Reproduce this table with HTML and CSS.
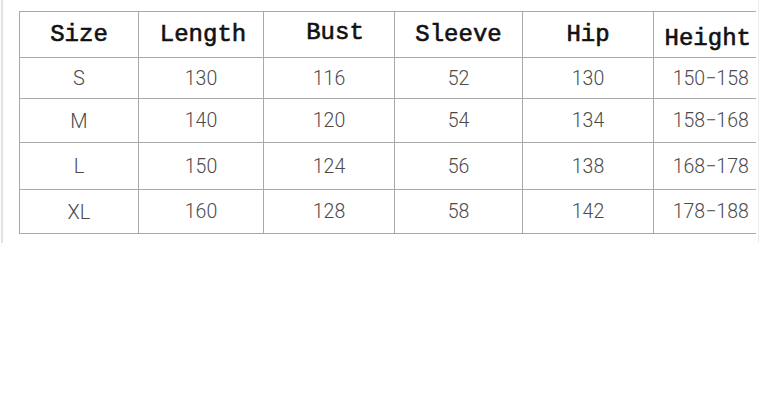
FILE: index.html
```html
<!DOCTYPE html>
<html>
<head>
<meta charset="utf-8">
<link rel="stylesheet" href="styles.css">
</head>
<body>
<div class="frame">
  <table class="sizes">
    <colgroup>
      <col class="c1"><col class="c2"><col class="c3"><col class="c4"><col class="c5"><col class="c6">
    </colgroup>
    <thead>
      <tr class="head">
        <th>Size</th><th class="len">Length</th><th class="bust">Bust</th><th>Sleeve</th><th>Hip</th><th class="hgt">Height</th>
      </tr>
    </thead>
    <tbody>
      <tr class="r1"><td class="sz">S</td><td>130</td><td>116</td><td>52</td><td>130</td><td class="rng">150−158</td></tr>
      <tr class="r2"><td class="sz">M</td><td>140</td><td>120</td><td>54</td><td>134</td><td class="rng">158−168</td></tr>
      <tr class="r3"><td class="sz">L</td><td>150</td><td>124</td><td>56</td><td>138</td><td class="rng">168−178</td></tr>
      <tr class="r4"><td class="sz">XL</td><td>160</td><td>128</td><td>58</td><td>142</td><td class="rng">178−188</td></tr>
    </tbody>
  </table>
</div>
</body>
</html>
```

FILE: styles.css
```css
html, body {
  margin: 0;
  padding: 0;
  background: #fff;
}

.frame {
  margin-left: 1px;
  width: 758px;
  height: 243px;
  border-left: 2px solid #e2e2e2;
  border-right: 1px solid #ececec;
  padding-top: 11px;
  padding-left: 16px;
  box-sizing: border-box;
}

.sizes {
  border-collapse: collapse;
  table-layout: fixed;
  width: 736px;
}

.c1 { width: 119px; }
.c2 { width: 125px; }
.c3 { width: 131px; }
.c4 { width: 128px; }
.c5 { width: 131px; }
.c6 { width: 102px; }

.sizes th, .sizes td {
  border: 1px solid #a9a9a9;
  padding: 0;
  text-align: center;
  vertical-align: middle;
}

.sizes th:last-child, .sizes td:last-child {
  border-right: none;
}

.sizes th {
  font-family: "Liberation Mono", "Courier New", monospace;
  font-size: 24px;
  font-weight: normal;
  -webkit-text-stroke: 0.6px #111;
  color: #111;
  height: 45px;
  line-height: 26px;
}

.sizes th.len { padding-left: 4px; }
.sizes th.bust { padding-left: 12px; padding-bottom: 3px; height: 42px; }
.sizes th.hgt { vertical-align: bottom; padding-bottom: 5px; padding-left: 6px; height: 40px; }

.sizes td {
  font-family: Roboto, "Liberation Sans", Arial, sans-serif;
  font-weight: 300;
  font-size: 19.5px;
  color: #4a4a4a;
}

.sizes td.sz { font-size: 20px; }
.sizes td.rng { padding-left: 12px; }

.r1 td { height: 40px; }
.r2 td { height: 43px; }
.r3 td { height: 46px; }
.r4 td { height: 43px; }
```
